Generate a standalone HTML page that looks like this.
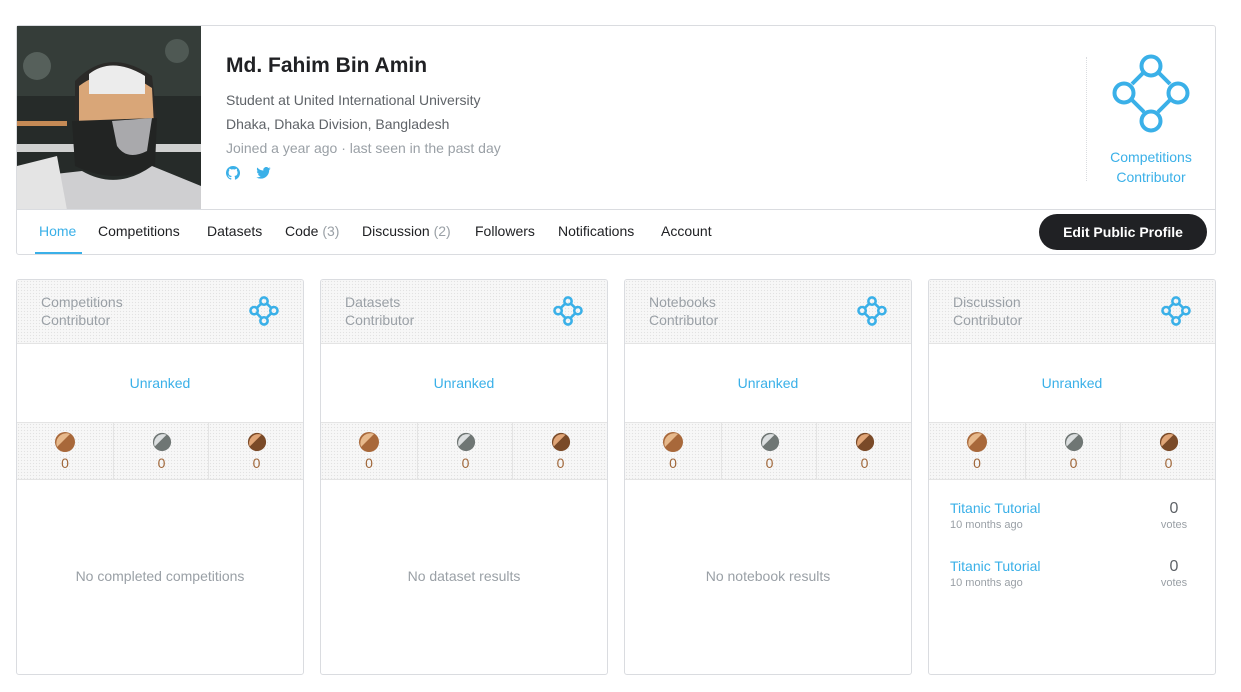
<!DOCTYPE html>
<html><head><meta charset="utf-8"><style>
*{box-sizing:border-box;margin:0;padding:0}
body{width:1241px;height:692px;background:#fff;font-family:"Liberation Sans",sans-serif;position:relative;overflow:hidden;color:#202124}
.abs{position:absolute}
.pc{left:16px;top:25px;width:1200px;height:230px;border:1px solid #dadce0;border-radius:3px}
.nav{left:16px;top:209px;width:1200px;height:46px;border-top:1px solid #dadce0}
.nav span{position:absolute;top:13px;font-size:14px;color:#202124}
.nav i{font-style:normal;color:#9aa0a6}
.card{width:288px;height:396px;top:279px;border:1px solid #dadce0;border-radius:3px;overflow:hidden}
.dot{background-color:#f7f7f7;background-image:radial-gradient(#e2e2e2 0.6px,transparent 0.8px);background-size:3px 3px}
.hd{position:absolute;left:0;top:0;width:100%;height:64px;border-bottom:1px solid #e4e4e4}
.hd p{position:absolute;left:24px;top:13px;font-size:14px;line-height:18px;color:#9aa0a6}
.rk{position:absolute;top:95px;width:100%;text-align:center;color:#3ab0e8;font-size:14px}
.md{position:absolute;top:142px;left:0;width:100%;height:58px;border-top:1px solid #e4e4e4;border-bottom:1px solid #e4e4e4}
.md div{position:absolute;top:0;width:96px;height:57px;text-align:center}
.md div+div{border-left:1px solid #e4e4e4}
.md span{position:absolute;top:32px;left:0;width:100%;font-size:14px;color:#a0673a}
.em{position:absolute;top:288px;width:100%;text-align:center;font-size:14px;color:#9aa0a6}
</style></head><body>
<div class="abs pc"></div>
<svg class="abs" style="left:17px;top:26px" width="184" height="184" viewBox="0 0 184 184">
<rect width="184" height="184" fill="#262b29"/>
<rect x="0" y="0" width="184" height="70" fill="#353d39"/>
<circle cx="20" cy="40" r="14" fill="#56605b"/><circle cx="160" cy="25" r="12" fill="#4f5954"/>
<rect x="0" y="118" width="184" height="8" fill="#cfd0d0"/>
<rect x="0" y="95" width="50" height="5" fill="#c58a55"/>
<path d="M58 55 Q92 20 135 50 L140 95 L58 95Z" fill="#2b2a28"/>
<path d="M62 60 Q95 35 135 62 L137 100 L62 100Z" fill="#d9a678"/>
<path d="M72 48 Q95 30 128 50 L128 68 L72 68Z" fill="#ececec"/>
<path d="M55 95 L140 92 L138 140 Q100 160 58 140Z" fill="#222423"/>
<path d="M95 95 L135 92 L130 125 Q110 135 100 120Z" fill="#a9a9ac"/>
<path d="M65 145 Q100 165 135 140 L184 160 L184 184 L10 184 L20 150Z" fill="#cfcfd1"/>
<path d="M0 140 L40 130 L50 184 L0 184Z" fill="#e4e4e4"/>
</svg>
<div class="abs" style="left:226px;top:54px;font-size:21px;font-weight:bold;color:#202124">Md. Fahim Bin Amin</div>
<div class="abs" style="left:226px;top:92px;font-size:14px;color:#5f6368">Student at United International University</div>
<div class="abs" style="left:226px;top:116px;font-size:14px;color:#5f6368">Dhaka, Dhaka Division, Bangladesh</div>
<div class="abs" style="left:226px;top:140px;font-size:14px;color:#9aa0a6">Joined a year ago · last seen in the past day</div>
<svg class="abs" style="left:226px;top:166px" width="14" height="14" viewBox="0 0 16 16"><path fill="#3ab0e8" d="M8 0a8 8 0 0 0-2.5 15.6c.4 0 .5-.2.5-.4v-1.5c-2.2.5-2.7-1-2.7-1-.4-.9-.9-1.2-.9-1.2-.7-.5.1-.5.1-.5.8.1 1.2.8 1.2.8.7 1.3 1.9.9 2.4.7 0-.5.3-.9.5-1.1-1.8-.2-3.6-.9-3.6-4 0-.9.3-1.6.8-2.1-.1-.2-.4-1 .1-2.1 0 0 .7-.2 2.2.8a7.400 7.400 0 0 1 4 0c1.5-1 2.2-.8 2.2-.8.4 1.1.2 1.900.1 2.1.5.6.8 1.300.8 2.1 0 3.100-1.900 3.800-3.600 4 .3.3.6.8.6 1.500v2.200c0 .2.100.5.600.4A8 8 0 0 0 8 0z"/></svg>
<svg class="abs" style="left:256px;top:167px" width="15" height="12" viewBox="0 0 24 20"><path fill="#3ab0e8" d="M24 2.4a10 10 0 0 1-2.8.8A5 5 0 0 0 23.3.4a10 10 0 0 1-3.1 1.2A4.900 4.900 0 0 0 11.800 6 14 14 0 0 1 1.700.9a4.900 4.900 0 0 0 1.500 6.600A4.900 4.900 0 0 1 1 6.900a4.900 4.900 0 0 0 3.900 4.800 5 5 0 0 1-2.200.1 4.900 4.900 0 0 0 4.600 3.400A9.900 9.900 0 0 1 0 17.200 14 14 0 0 0 7.500 19.400c9.100 0 14-7.500 14-14v-.6A10 10 0 0 0 24 2.400z"/></svg>
<div class="abs" style="left:1086px;top:57px;width:0;height:124px;border-left:1px dotted #dadce0"></div>
<svg class="abs" style="left:1110px;top:52px" width="82" height="82" viewBox="0 0 82 82"><g fill="none" stroke="#3ab0e8" stroke-width="4"><path d="M34 20 L22 32 M48 20 L60 32 M22 48 L34 60 M60 48 L48 60"/><circle cx="41" cy="14" r="9.5"/><circle cx="14" cy="41" r="9.5"/><circle cx="68" cy="41" r="9.5"/><circle cx="41" cy="69" r="9.5"/></g></svg>
<div class="abs" style="left:1096px;top:147px;width:110px;text-align:center;font-size:14px;line-height:20px;color:#3ab0e8">Competitions<br>Contributor</div>
<div class="abs nav">
<span style="left:23px;color:#3ab0e8">Home</span>
<div class="abs" style="left:19px;top:42px;width:47px;height:2px;background:#3ab0e8"></div>
<span style="left:82px">Competitions</span>
<span style="left:191px">Datasets</span>
<span style="left:269px">Code <i>(3)</i></span>
<span style="left:346px">Discussion <i>(2)</i></span>
<span style="left:459px">Followers</span>
<span style="left:542px">Notifications</span>
<span style="left:645px">Account</span>
<div class="abs" style="left:1023px;top:4px;width:168px;height:36px;border-radius:18px;background:#202124;color:#fff;font-weight:bold;font-size:14px;text-align:center;line-height:36px">Edit Public Profile</div>
</div>
<div class="abs card" style="left:16px">
<div class="hd dot"><p>Competitions<br>Contributor</p><svg style="position:absolute;left:232px;top:16px" width="30" height="30" viewBox="0 0 82 82"><g fill="none" stroke="#3ab0e8" stroke-width="7"><path d="M34 20 L22 32 M48 20 L60 32 M22 48 L34 60 M60 48 L48 60"/><circle cx="41" cy="14" r="10"/><circle cx="14" cy="40" r="10"/><circle cx="68" cy="40" r="10"/><circle cx="41" cy="68" r="10"/></g></svg></div>
<div class="rk">Unranked</div>
<div class="md dot"><div style="left:0"><svg style="margin-top:8px" width="22" height="22" viewBox="0 0 22 22"><circle cx="11" cy="11" r="10" fill="#a8683a"/><path d="M3 16 A10 10 0 0 1 16 3Z" fill="#e7b98c"/></svg><span>0</span></div><div style="left:96px"><svg style="margin-top:9px" width="20" height="20" viewBox="0 0 22 22"><circle cx="11" cy="11" r="10" fill="#6f7674"/><path d="M3 16 A10 10 0 0 1 16 3Z" fill="#dcdfe0"/></svg><span>0</span></div><div style="left:191px"><svg style="margin-top:9px" width="20" height="20" viewBox="0 0 22 22"><circle cx="11" cy="11" r="10" fill="#7a4a28"/><path d="M3 16 A10 10 0 0 1 16 3Z" fill="#e0a577"/></svg><span>0</span></div></div>
<div class="em">No completed competitions</div>
</div>
<div class="abs card" style="left:320px">
<div class="hd dot"><p>Datasets<br>Contributor</p><svg style="position:absolute;left:232px;top:16px" width="30" height="30" viewBox="0 0 82 82"><g fill="none" stroke="#3ab0e8" stroke-width="7"><path d="M34 20 L22 32 M48 20 L60 32 M22 48 L34 60 M60 48 L48 60"/><circle cx="41" cy="14" r="10"/><circle cx="14" cy="40" r="10"/><circle cx="68" cy="40" r="10"/><circle cx="41" cy="68" r="10"/></g></svg></div>
<div class="rk">Unranked</div>
<div class="md dot"><div style="left:0"><svg style="margin-top:8px" width="22" height="22" viewBox="0 0 22 22"><circle cx="11" cy="11" r="10" fill="#a8683a"/><path d="M3 16 A10 10 0 0 1 16 3Z" fill="#e7b98c"/></svg><span>0</span></div><div style="left:96px"><svg style="margin-top:9px" width="20" height="20" viewBox="0 0 22 22"><circle cx="11" cy="11" r="10" fill="#6f7674"/><path d="M3 16 A10 10 0 0 1 16 3Z" fill="#dcdfe0"/></svg><span>0</span></div><div style="left:191px"><svg style="margin-top:9px" width="20" height="20" viewBox="0 0 22 22"><circle cx="11" cy="11" r="10" fill="#7a4a28"/><path d="M3 16 A10 10 0 0 1 16 3Z" fill="#e0a577"/></svg><span>0</span></div></div>
<div class="em">No dataset results</div>
</div>
<div class="abs card" style="left:624px">
<div class="hd dot"><p>Notebooks<br>Contributor</p><svg style="position:absolute;left:232px;top:16px" width="30" height="30" viewBox="0 0 82 82"><g fill="none" stroke="#3ab0e8" stroke-width="7"><path d="M34 20 L22 32 M48 20 L60 32 M22 48 L34 60 M60 48 L48 60"/><circle cx="41" cy="14" r="10"/><circle cx="14" cy="40" r="10"/><circle cx="68" cy="40" r="10"/><circle cx="41" cy="68" r="10"/></g></svg></div>
<div class="rk">Unranked</div>
<div class="md dot"><div style="left:0"><svg style="margin-top:8px" width="22" height="22" viewBox="0 0 22 22"><circle cx="11" cy="11" r="10" fill="#a8683a"/><path d="M3 16 A10 10 0 0 1 16 3Z" fill="#e7b98c"/></svg><span>0</span></div><div style="left:96px"><svg style="margin-top:9px" width="20" height="20" viewBox="0 0 22 22"><circle cx="11" cy="11" r="10" fill="#6f7674"/><path d="M3 16 A10 10 0 0 1 16 3Z" fill="#dcdfe0"/></svg><span>0</span></div><div style="left:191px"><svg style="margin-top:9px" width="20" height="20" viewBox="0 0 22 22"><circle cx="11" cy="11" r="10" fill="#7a4a28"/><path d="M3 16 A10 10 0 0 1 16 3Z" fill="#e0a577"/></svg><span>0</span></div></div>
<div class="em">No notebook results</div>
</div>
<div class="abs card" style="left:928px">
<div class="hd dot"><p>Discussion<br>Contributor</p><svg style="position:absolute;left:232px;top:16px" width="30" height="30" viewBox="0 0 82 82"><g fill="none" stroke="#3ab0e8" stroke-width="7"><path d="M34 20 L22 32 M48 20 L60 32 M22 48 L34 60 M60 48 L48 60"/><circle cx="41" cy="14" r="10"/><circle cx="14" cy="40" r="10"/><circle cx="68" cy="40" r="10"/><circle cx="41" cy="68" r="10"/></g></svg></div>
<div class="rk">Unranked</div>
<div class="md dot"><div style="left:0"><svg style="margin-top:8px" width="22" height="22" viewBox="0 0 22 22"><circle cx="11" cy="11" r="10" fill="#a8683a"/><path d="M3 16 A10 10 0 0 1 16 3Z" fill="#e7b98c"/></svg><span>0</span></div><div style="left:96px"><svg style="margin-top:9px" width="20" height="20" viewBox="0 0 22 22"><circle cx="11" cy="11" r="10" fill="#6f7674"/><path d="M3 16 A10 10 0 0 1 16 3Z" fill="#dcdfe0"/></svg><span>0</span></div><div style="left:191px"><svg style="margin-top:9px" width="20" height="20" viewBox="0 0 22 22"><circle cx="11" cy="11" r="10" fill="#7a4a28"/><path d="M3 16 A10 10 0 0 1 16 3Z" fill="#e0a577"/></svg><span>0</span></div></div>
<div class="abs" style="left:21px;top:220px;font-size:14px;color:#3ab0e8">Titanic Tutorial</div>
<div class="abs" style="left:21px;top:239px;font-size:11px;color:#9aa0a6">10 months ago</div>
<div class="abs" style="left:225px;top:220px;width:40px;text-align:center;font-size:16px;color:#5f6368">0</div>
<div class="abs" style="left:225px;top:239px;width:40px;text-align:center;font-size:11px;color:#9aa0a6">votes</div>
<div class="abs" style="left:21px;top:278px;font-size:14px;color:#3ab0e8">Titanic Tutorial</div>
<div class="abs" style="left:21px;top:297px;font-size:11px;color:#9aa0a6">10 months ago</div>
<div class="abs" style="left:225px;top:278px;width:40px;text-align:center;font-size:16px;color:#5f6368">0</div>
<div class="abs" style="left:225px;top:297px;width:40px;text-align:center;font-size:11px;color:#9aa0a6">votes</div>
</div>
</body></html>
